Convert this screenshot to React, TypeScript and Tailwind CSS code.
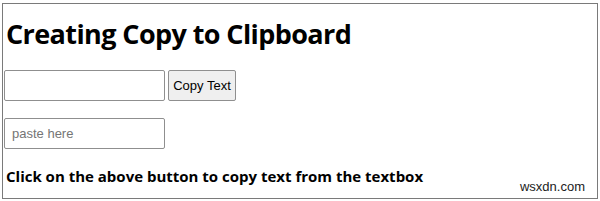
export default function App() {
  return (
    <div className="h-[201px] w-[600px] bg-white p-0">
      <div className="relative mx-[2px] mt-[3px] h-[196px] w-[596px] border border-[#7a7a7a] bg-white font-['Open_Sans',sans-serif] text-black">
        <h1 className="ml-[3px] mt-[12px] text-[27px] font-bold leading-[36px] tracking-[-0.6px]">
          Creating Copy to Clipboard
        </h1>
        <div className="mt-[18px] flex items-center gap-[3px] pl-[1px]">
          <input
            type="text"
            className="h-[31px] w-[161px] rounded-[2px] border border-[#8f8f8f] bg-white px-2 text-[13px] font-['Liberation_Sans',sans-serif] outline-none"
          />
          <button
            type="button"
            className="h-[31px] w-[68px] rounded-[2px] border border-[#8f8f8f] bg-[#efefef] text-[13px] font-['Liberation_Sans',sans-serif] text-black"
          >
            Copy Text
          </button>
        </div>
        <div className="mt-[17px] pl-[1px]">
          <input
            type="text"
            placeholder="paste here"
            className="h-[31px] w-[161px] rounded-[2px] border border-[#8f8f8f] bg-white px-[7px] text-[13px] font-['Liberation_Sans',sans-serif] outline-none placeholder:text-[#757575]"
          />
        </div>
        <p className="ml-[3px] mt-[17px] text-[15px] font-bold leading-[20px]">
          Click on the above button to copy text from the textbox
        </p>
        <span className="absolute bottom-[2px] right-[12px] font-['Liberation_Sans',sans-serif] text-[13px] text-[#222]">
          wsxdn.com
        </span>
      </div>
    </div>
  );
}
